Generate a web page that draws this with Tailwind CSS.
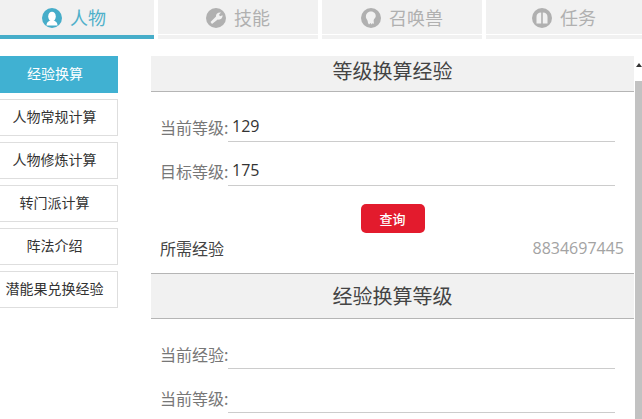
<!DOCTYPE html>
<html lang="zh-CN">
<head>
    <meta charset="UTF-8">
    <script src="https://cdn.jsdelivr.net/npm/@tailwindcss/browser@4"></script>
    <title>等级换算经验</title>
</head>
<body class="bg-white w-[642px] h-[419px] overflow-hidden font-['Noto_Sans_CJK_SC','Liberation_Sans',sans-serif]">
    <!-- tabs -->
    <nav class="flex h-[39px]">
        <div class="w-[154px] h-[39px] bg-[#f1f1f1] border-b-[4px] border-[#46adc9] flex items-center justify-center gap-[8px] pr-[6px] text-[#4fb0ca] text-[18px]">
            <svg class="w-[20px] h-[20px]" viewBox="0 0 20 20"><circle cx="10" cy="10" r="10" fill="#46adc9"/><ellipse cx="10" cy="8.500" rx="3.800" ry="4.800" fill="#fff"/><path d="M4.500 17.500c0-3 2-5 5.500-5s5.500 2 5.500 5z" fill="#fff"/></svg>
            <span>人物</span>
        </div>
        <div class="ml-[4px] w-[160px] h-[39px] bg-[#f1f1f1] relative flex items-center justify-center gap-[8px] pb-[4px] text-[#b0b0b0] text-[18px]">
            <svg class="w-[20px] h-[20px]" viewBox="0 0 20 20"><circle cx="10" cy="10" r="10" fill="#b0b0b0"/><path d="M4.500 14l5.500-5.500c-.4-2.500 1.800-4.500 5-4l-2 2.300 1 1.500 2.500-1c.3 2.800-2.200 5-4.800 4.300L6 16z" fill="#f1f1f1"/></svg>
            <span>技能</span>
            <div class="absolute left-0 right-0 bottom-[4px] h-px bg-white"></div>
        </div>
        <div class="ml-[4px] w-[160px] h-[39px] bg-[#f1f1f1] relative flex items-center justify-center gap-[8px] pb-[4px] text-[#b0b0b0] text-[18px]">
            <svg class="w-[20px] h-[20px]" viewBox="0 0 20 20"><circle cx="10" cy="10" r="10" fill="#b0b0b0"/><path d="M10 3.500c3.200 0 5 2.400 4.700 5-.2 1.500-1.500 2.300-1.900 3.300-.3 1 0 1.700.2 4.200l-1.200-1-1 1.500-1.200-1.500L8 16.500 7 15c-.2-1.300-.2-2.200-.8-3.100-.8-1.200-1.500-2-1.300-3.600.2-2.800 2.500-4.800 5.100-4.800z" fill="#f1f1f1"/></svg>
            <span>召唤兽</span>
            <div class="absolute left-0 right-0 bottom-[4px] h-px bg-white"></div>
        </div>
        <div class="ml-[4px] w-[156px] h-[39px] bg-[#f1f1f1] relative flex items-center justify-center gap-[8px] pb-[4px] text-[#b0b0b0] text-[18px]">
            <svg class="w-[20px] h-[20px]" viewBox="0 0 20 20"><circle cx="10" cy="10" r="10" fill="#b0b0b0"/><path d="M9.200 4.500C6 4.500 4.500 6 4.500 9v6.500h4.700zM10.800 4.500c3.200 0 4.700 1.500 4.700 4.500v6.500h-4.700z" fill="#f1f1f1"/></svg>
            <span>任务</span>
            <div class="absolute left-0 right-0 bottom-[4px] h-px bg-white"></div>
        </div>
    </nav>

    <div class="flex mt-[17px]">
        <!-- left menu -->
        <aside class="w-[118px] shrink-0 flex flex-col gap-[6px] text-[14px] text-[#333] whitespace-nowrap">
            <div class="h-[37px] bg-[#40b1d2] text-white flex items-center justify-center pb-[2px] pr-[8px]">经验换算</div>
            <div class="h-[37px] border border-l-0 border-[#dedede] flex items-center justify-center pb-[2px] pr-[8px]">人物常规计算</div>
            <div class="h-[37px] border border-l-0 border-[#dedede] flex items-center justify-center pb-[2px] pr-[8px]">人物修炼计算</div>
            <div class="h-[37px] border border-l-0 border-[#dedede] flex items-center justify-center pb-[2px] pr-[8px]">转门派计算</div>
            <div class="h-[37px] border border-l-0 border-[#dedede] flex items-center justify-center pb-[2px] pr-[8px]">阵法介绍</div>
            <div class="h-[37px] border border-l-0 border-[#dedede] flex items-center justify-center pb-[2px] pr-[8px]">潜能果兑换经验</div>
        </aside>

        <!-- main -->
        <main class="ml-[33px] w-[483px] shrink-0">
            <h2 class="h-[36px] bg-[#f1f1f1] border-b border-[#b5b5b5] flex items-center justify-center text-[20px] font-normal text-[#444] pb-[6px]">等级换算经验</h2>
            <div class="flex items-center h-[30px] mt-[20px] ml-[9px] text-[16px] text-[#777]">
                <span class="w-[68px] shrink-0 whitespace-nowrap">当前等级:</span>
                <span class="w-[387px] h-[30px] border-b border-[#ccc] text-[#333] pl-[4px] leading-[28px] font-['Open_Sans',sans-serif]">129</span>
            </div>
            <div class="flex items-center h-[30px] mt-[14px] ml-[9px] text-[16px] text-[#777]">
                <span class="w-[68px] shrink-0 whitespace-nowrap">目标等级:</span>
                <span class="w-[387px] h-[30px] border-b border-[#ccc] text-[#333] pl-[4px] leading-[28px] font-['Open_Sans',sans-serif]">175</span>
            </div>
            <div class="flex justify-center mt-[18px]">
                <button class="w-[64px] h-[29px] bg-[#e31b2d] rounded-[5px] text-white text-[13px] font-medium">查询</button>
            </div>
            <div class="flex items-center justify-between h-[28px] mt-[1px] ml-[9px] text-[16px] text-[#444]">
                <span>所需经验</span>
                <span class="text-[#a3a3a3] font-['Open_Sans',sans-serif] mr-[10px]">8834697445</span>
            </div>
            <h2 class="h-[46px] mt-[11px] bg-[#f1f1f1] border-y border-[#b5b5b5] flex items-center justify-center text-[20px] font-normal text-[#444]">经验换算等级</h2>
            <div class="flex items-center h-[30px] mt-[20px] ml-[9px] text-[16px] text-[#777]">
                <span class="w-[68px] shrink-0 whitespace-nowrap">当前经验:</span>
                <span class="w-[387px] h-[30px] border-b border-[#ccc]"></span>
            </div>
            <div class="flex items-center h-[30px] mt-[14px] ml-[9px] text-[16px] text-[#777]">
                <span class="w-[68px] shrink-0 whitespace-nowrap">当前等级:</span>
                <span class="w-[387px] h-[30px] border-b border-[#ccc]"></span>
            </div>
        </main>

        <!-- scrollbar -->
        <div class="w-[7px] ml-[1px] shrink-0 flex flex-col">
            <div class="h-[25px] flex justify-end items-start pt-[7px]">
                <div class="w-0 h-0 border-x-[3px] border-x-transparent border-b-[4px] border-b-[#333]"></div>
            </div>
            <div class="h-[340px] bg-[#c2c2c2]"></div>
        </div>
    </div>
</body>
</html>
